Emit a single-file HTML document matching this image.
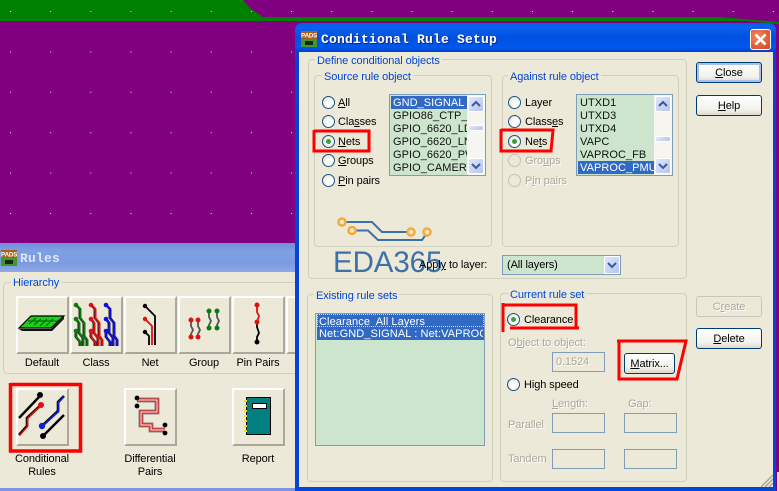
<!DOCTYPE html>
<html><head><meta charset="utf-8">
<style>
html,body{margin:0;padding:0}
body{width:779px;height:491px;overflow:hidden;position:relative;background:#800080;font-family:"Liberation Sans",sans-serif;font-size:11px;color:#000;letter-spacing:-.1px}
div,span.t{position:absolute;box-sizing:border-box}
.t{line-height:14px;white-space:nowrap;margin-top:1px}
.bl{color:#0046d5;background:#ece9d8;padding:0 2px}
.dis{color:#aca899;text-shadow:1px 1px 0 #fff}
.gb{border:1px solid #d0d0bf;border-radius:4px}
.r{width:13px;height:13px;border-radius:50%;border:1px solid #1c5180;background:radial-gradient(circle at 65% 65%,#fff 30%,#dcd8cc 100%)}
.r.on:after{content:"";position:absolute;left:3px;top:3px;width:5px;height:5px;border-radius:50%;background:#2fa82f}
.r.off{border-color:#c5c2b2;background:#ece9d8}
.btn{border:1px solid #003c74;border-radius:3px;background:linear-gradient(#fff,#f3f2ec 70%,#dcd8cc);text-align:center;line-height:21px}
.btn.def{box-shadow:inset 0 0 0 2px #a8c0e8}
.btn.d{border-color:#c9c7ba;color:#aca899;background:#ece9d8;text-shadow:1px 1px 0 #fff}
.list{background:#cce5cc;border:1px solid #7f9db9;overflow:hidden}
.row{left:1px;padding-left:2px;height:13px;line-height:14px;width:76px;overflow:hidden;white-space:nowrap;color:#111;letter-spacing:.05px;font-size:11px}
.sel{background:#316ac5;color:#fff}
.sb{left:77px;top:0;width:18px;height:80px;background:#f6f5f0}
.sbb{left:1px;width:16px;height:16px;background:linear-gradient(135deg,#dfe8fb,#b3c5ef);border:1px solid #fff;border-radius:2px}
.inp{border:1px solid #7f9db9;background:#ece9d8}
.tile{background:#ece9d8;border:2px solid;border-color:#fff #aca899 #aca899 #fff}
.lab{text-align:center;line-height:13px}
</style></head><body>

<svg style="position:absolute;left:0;top:0" width="779" height="491">
<defs><pattern id="p" x="10" y="11" width="40.15" height="40.4" patternUnits="userSpaceOnUse"><rect width="1" height="1" fill="#e8e0e8"/></pattern></defs>
<rect width="779" height="491" fill="#800080"/>
<path d="M0 0H243L250 8L263 17H720L779 22V24L745 21H0Z" fill="#008000"/>
<rect width="779" height="243" fill="url(#p)"/>
<rect x="777" y="472" width="2" height="19" fill="#dcdcdc"/>
</svg>

<!-- Rules window -->
<div style="left:0;top:243px;width:295px;height:29px;background:linear-gradient(#7090dc,#7f9fe4 30%,#7c9be0 70%,#90a8e8)"></div>
<span class="t" style="left:20px;top:251px;font:bold 13px/14px 'Liberation Mono',monospace;color:#dfe7f8;letter-spacing:.2px">Rules</span>
<div style="left:0;top:272px;width:295px;height:216px;background:#ece9d8"></div>
<div style="left:0;top:488px;width:295px;height:3px;background:#7b95e0"></div>
<svg style="position:absolute;left:1px;top:250px" width="16" height="16"><rect width="16" height="8" fill="#a8601c"/><rect y="8" width="16" height="8" fill="#3f9a2a"/><rect x="4" y="10" width="8" height="4" fill="#222"/><text x="0" y="6.5" font-family="Liberation Sans" font-weight="bold" font-size="6.2" fill="#fff">PADS</text></svg>

<div class="gb" style="left:3px;top:282px;width:310px;height:92px"></div>
<span class="t bl" style="left:11px;top:275px">Hierarchy</span>

<div class="tile" style="left:16px;top:296px;width:53px;height:58px"></div>
<div class="tile" style="left:70px;top:296px;width:53px;height:58px"></div>
<div class="tile" style="left:124px;top:296px;width:53px;height:58px"></div>
<div class="tile" style="left:178px;top:296px;width:53px;height:58px"></div>
<div class="tile" style="left:232px;top:296px;width:53px;height:58px"></div>
<div class="tile" style="left:286px;top:296px;width:20px;height:58px"></div>
<div class="tile" style="left:16px;top:388px;width:53px;height:58px"></div>
<div class="tile" style="left:124px;top:388px;width:53px;height:58px"></div>
<div class="tile" style="left:232px;top:388px;width:53px;height:58px"></div>

<svg style="position:absolute;left:0;top:0" width="295" height="491" fill="none" stroke-linejoin="miter">
<!-- default -->
<path d="M19 328L31 316H64L51 328Z" fill="#18d018" stroke="#000" stroke-width="1.2"/>
<path d="M19 329H51L64 317V319L52 331H22Z" fill="#111"/>
<path d="M29 324L36 318M34 325L41 319M40 326L47 319M46 326L53 319M28 321H58" stroke="#0a5a0a"/>
<!-- class -->
<defs><g id="tr"><path d="M76 305L80 309V318L84 323V336L87 340V346M76 319L79 323V333L83 338V346M76 331V337L80 342V346"/></g></defs>
<g stroke-width="2">
<g transform="translate(-1 0)" stroke="#222" stroke-width="1"><use href="#tr"/></g><g stroke="#107810" transform="translate(.5 0)"><use href="#tr"/></g>
<g transform="translate(14 0)" stroke="#222" stroke-width="1"><use href="#tr"/></g><g stroke="#e01010" transform="translate(15.5 0)"><use href="#tr"/></g>
<g transform="translate(29 0)" stroke="#222" stroke-width="1"><use href="#tr"/></g><g stroke="#1010e0" transform="translate(30.5 0)"><use href="#tr"/></g>
</g>
<g fill="#107810"><circle cx="76" cy="305" r="2.3"/><circle cx="76" cy="319" r="2.3"/><circle cx="76" cy="331" r="2.3"/></g>
<g fill="#e01010"><circle cx="91" cy="305" r="2.3"/><circle cx="91" cy="319" r="2.3"/><circle cx="91" cy="331" r="2.3"/></g>
<g fill="#1010e0"><circle cx="106" cy="305" r="2.3"/><circle cx="106" cy="319" r="2.3"/><circle cx="106" cy="331" r="2.3"/></g>
<!-- net -->
<path d="M145 306L155 316V345" stroke="#000" stroke-width="1.8"/><path d="M145 319L152 326V345" stroke="#e01010" stroke-width="1.8"/><path d="M145 332L149 336V345" stroke="#000" stroke-width="1.8"/>
<circle cx="145" cy="306" r="2.2" fill="#000"/><circle cx="145" cy="319" r="2.2" fill="#e01010"/><circle cx="145" cy="332" r="2.2" fill="#000"/>
<!-- group -->
<path d="M191 320V326L193 330L191 334V337M198 320V326L200 330L198 334V337" stroke="#555" stroke-width="1.8"/>
<path d="M209 311V317L211 321L209 325V328M217 311V317L219 321L217 325V328" stroke="#555" stroke-width="1.8"/>
<g fill="#e01010"><circle cx="191" cy="320" r="2.5"/><circle cx="198" cy="320" r="2.5"/><circle cx="191" cy="337" r="2.5"/><circle cx="198" cy="337" r="2.5"/></g>
<g fill="#107810"><circle cx="209" cy="311" r="2.5"/><circle cx="217" cy="311" r="2.5"/><circle cx="209" cy="328" r="2.5"/><circle cx="217" cy="328" r="2.5"/></g>
<!-- pin pairs -->
<path d="M257 305V312L259 316L257 322" stroke="#e01010" stroke-width="1.8"/><path d="M257 322V327L259 333L257 337V342" stroke="#000" stroke-width="1.8"/>
<circle cx="257" cy="305" r="2.5" fill="#e01010"/><circle cx="257" cy="322" r="2.5" fill="#e01010"/><circle cx="257" cy="342" r="2.5" fill="#000"/>
<!-- conditional -->
<path d="M19 418L40 396" stroke="#000" stroke-width="2.400"/>
<path d="M19 435L27 426V418L41 405" stroke="#000" stroke-width="2.600"/><path d="M19.500 435.500L27.500 426.500V418.500L41 405.500" stroke="#e01010" stroke-width="1.600"/>
<path d="M64 396L58 402V411L42 426" stroke="#000" stroke-width="2.600"/><path d="M64 396.500L58.500 402.500V411.500L42 426.500" stroke="#1020d0" stroke-width="1.800"/>
<path d="M64 415L43 436" stroke="#000" stroke-width="2.400"/>
<circle cx="40" cy="395" r="3" fill="#000"/><circle cx="41" cy="405" r="3" fill="#e01010"/><circle cx="42" cy="426" r="3.200" fill="#1020d0"/><circle cx="43" cy="436" r="3" fill="#000"/>
<!-- differential -->
<path d="M137 400H157V412H141V425H151V430H165" stroke="#888" stroke-width="5"/>
<path d="M137 400H157V412H141V425H151V430H165" stroke="#e01010" stroke-width="3"/>
<path d="M137 400H157V412H141V425H151V430H165" stroke="#fff" stroke-width="1"/>
<g fill="#000"><circle cx="137" cy="398" r="2.4"/><circle cx="137" cy="406" r="2.4"/><circle cx="165" cy="425" r="2.4"/><circle cx="165" cy="433" r="2.4"/></g>
<!-- report -->
<rect x="246.500" y="397.500" width="24" height="37" fill="#008080" stroke="#000"/>
<rect x="252.500" y="403.500" width="14" height="5" fill="#fff" stroke="#000"/>
<g fill="#f0e030"><rect x="244" y="400" width="3" height="2"/><rect x="244" y="405" width="3" height="2"/><rect x="244" y="410" width="3" height="2"/><rect x="244" y="415" width="3" height="2"/><rect x="244" y="420" width="3" height="2"/><rect x="244" y="425" width="3" height="2"/><rect x="244" y="430" width="3" height="2"/></g>
</svg>

<div class="lab" style="left:12px;top:357px;width:60px">Default</div>
<div class="lab" style="left:66px;top:357px;width:60px">Class</div>
<div class="lab" style="left:120px;top:357px;width:60px">Net</div>
<div class="lab" style="left:174px;top:357px;width:60px">Group</div>
<div class="lab" style="left:228px;top:357px;width:60px">Pin Pairs</div>
<div class="lab" style="left:2px;top:453px;width:80px">Conditional<br>Rules</div>
<div class="lab" style="left:110px;top:453px;width:80px">Differential<br>Pairs</div>
<div class="lab" style="left:218px;top:453px;width:80px">Report</div>

<!-- Dialog -->
<div style="left:295px;top:23px;width:481px;height:468px;background:linear-gradient(#0a3fd6,#0a3fd6 20px,#0046d8);border-radius:7px 7px 0 0"></div>
<div style="left:295px;top:23px;width:481px;height:29px;background:linear-gradient(#0a5ae0,#0a62f0 15%,#0050e0 50%,#0058ec 85%,#0040c8);border-radius:7px 7px 0 0"></div>
<div style="left:299px;top:52px;width:474px;height:435px;background:#ece9d8"></div>
<svg style="position:absolute;left:301px;top:31px" width="16" height="16"><rect width="16" height="8" fill="#a8601c"/><rect y="8" width="16" height="8" fill="#3f9a2a"/><rect x="4" y="10" width="8" height="4" fill="#222"/><text x="0" y="6.5" font-family="Liberation Sans" font-weight="bold" font-size="6.2" fill="#fff">PADS</text></svg>
<span class="t" style="left:321px;top:32px;font:bold 13px/14px 'Liberation Mono',monospace;color:#fff;letter-spacing:.2px;text-shadow:1px 1px 0 #0a2a90">Conditional Rule Setup</span>
<div style="left:750px;top:29px;width:21px;height:21px;border:1px solid #fff;border-radius:3px;background:radial-gradient(circle at 35% 35%,#ef8a60,#d8421c)"></div>
<svg style="position:absolute;left:750px;top:29px" width="21" height="21"><path d="M5.500 5.500L15.500 15.500M15.500 5.500L5.500 15.500" stroke="#fff" stroke-width="2.600"/></svg>

<!-- Groups -->
<div class="gb" style="left:308px;top:59px;width:379px;height:220px"></div>
<span class="t bl" style="left:315px;top:53px">Define conditional objects</span>
<div class="gb" style="left:314px;top:75px;width:178px;height:172px"></div>
<span class="t bl" style="left:322px;top:69px">Source rule object</span>
<div class="gb" style="left:502px;top:75px;width:177px;height:172px"></div>
<span class="t bl" style="left:508px;top:69px">Against rule object</span>
<div class="gb" style="left:307px;top:294px;width:186px;height:188px"></div>
<span class="t bl" style="left:314px;top:288px">Existing rule sets</span>
<div class="gb" style="left:500px;top:293px;width:187px;height:189px"></div>
<span class="t bl" style="left:508px;top:287px">Current rule set</span>

<!-- Source radios -->
<div class="r" style="left:322px;top:96px"></div><span class="t" style="left:338px;top:95px"><u>A</u>ll</span>
<div class="r" style="left:322px;top:115px"></div><span class="t" style="left:338px;top:114px">Cla<u>s</u>ses</span>
<div class="r on" style="left:322px;top:135px"></div><span class="t" style="left:338px;top:134px"><u>N</u>ets</span>
<div class="r" style="left:322px;top:154px"></div><span class="t" style="left:338px;top:153px"><u>G</u>roups</span>
<div class="r" style="left:322px;top:174px"></div><span class="t" style="left:338px;top:173px"><u>P</u>in pairs</span>

<!-- Source list -->
<div class="list" style="left:389px;top:94px;width:97px;height:82px">
<div class="row sel" style="top:1px">GND_SIGNAL</div>
<div class="row" style="top:14px">GPIO86_CTP_R</div>
<div class="row" style="top:27px">GPIO_6620_LDO</div>
<div class="row" style="top:40px">GPIO_6620_LNA</div>
<div class="row" style="top:53px">GPIO_6620_PWR</div>
<div class="row" style="top:66px">GPIO_CAMERA</div>
<div class="sb"><div class="sbb" style="top:1px"></div><div class="sbb" style="top:30px;height:6px"></div><div class="sbb" style="top:63px"></div>
<svg style="position:absolute;left:0;top:0" width="18" height="80" fill="none" stroke="#3a5a98" stroke-width="2"><path d="M5 11L9 7L13 11M5 69L9 73L13 69"/></svg></div>
</div>

<!-- Against radios -->
<div class="r" style="left:508px;top:96px"></div><span class="t" style="left:525px;top:95px">Layer</span>
<div class="r" style="left:508px;top:115px"></div><span class="t" style="left:525px;top:114px">Class<u>e</u>s</span>
<div class="r on" style="left:508px;top:135px"></div><span class="t" style="left:525px;top:134px">Ne<u>t</u>s</span>
<div class="r off" style="left:508px;top:154px"></div><span class="t dis" style="left:525px;top:153px">Gro<u>u</u>ps</span>
<div class="r off" style="left:508px;top:174px"></div><span class="t dis" style="left:525px;top:173px">P<u>i</u>n pairs</span>

<div class="list" style="left:576px;top:94px;width:97px;height:82px">
<div class="row" style="top:1px">UTXD1</div>
<div class="row" style="top:14px">UTXD3</div>
<div class="row" style="top:27px">UTXD4</div>
<div class="row" style="top:40px">VAPC</div>
<div class="row" style="top:53px">VAPROC_FB</div>
<div class="row sel" style="top:66px">VAPROC_PMU</div>
<div class="sb"><div class="sbb" style="top:1px"></div><div class="sbb" style="top:41px;height:6px"></div><div class="sbb" style="top:63px"></div>
<svg style="position:absolute;left:0;top:0" width="18" height="80" fill="none" stroke="#3a5a98" stroke-width="2"><path d="M5 11L9 7L13 11M5 69L9 73L13 69"/></svg></div>
</div>

<!-- Logo -->
<svg style="position:absolute;left:330px;top:212px" width="120" height="66" fill="none">
<path d="M12 10H42L52 20H81M22 18.500H38L48 28H92L97 21" stroke="#3c70a8" stroke-width="2"/>
<g stroke="#f2a93f" stroke-width="2.500" fill="#fbe9c8"><circle cx="12" cy="10" r="3.500"/><circle cx="22" cy="18.500" r="3.500"/><circle cx="81" cy="20" r="3.500"/><circle cx="97" cy="20" r="3.500"/></g>
<text x="3" y="60" font-family="Liberation Sans" font-size="29.500" fill="#3c70a8">EDA365</text>
</svg>
<span class="t" style="left:419px;top:257px">Appl<u>y</u> to layer:</span>

<!-- Combo -->
<div style="left:502px;top:255px;width:119px;height:20px;background:#cce5cc;border:1px solid #7f9db9"></div>
<span class="t" style="left:507px;top:257px">(All layers)</span>
<div style="left:604px;top:256px;width:16px;height:18px;background:linear-gradient(135deg,#dfe8fb,#b3c5ef);border:1px solid #fff;border-radius:2px"></div>
<svg style="position:absolute;left:604px;top:256px" width="16" height="18" fill="none" stroke="#3a5a98" stroke-width="2"><path d="M4 7L8 11L12 7"/></svg>

<!-- Existing list -->
<div class="list" style="left:315px;top:313px;width:170px;height:133px">
<div style="left:1px;top:0;width:167px;height:26px;background:#316ac5"></div>
<div style="left:1px;top:0;width:167px;height:13px;border:1px dotted #f0d890"></div>
<span class="t" style="left:3px;top:0;color:#fff;line-height:14px;letter-spacing:.1px">Clearance&nbsp; All Layers</span>
<div style="left:3px;top:13px;width:164px;height:14px;overflow:hidden;color:#fff;line-height:14px;white-space:nowrap;letter-spacing:.1px">Net:GND_SIGNAL : Net:VAPROC_PMU</div>
</div>

<!-- Current rule set -->
<div class="r on" style="left:507px;top:313px"></div><span class="t" style="left:524px;top:312px">Clearance</span>
<span class="t dis" style="left:508px;top:335px">O<u>b</u>ject to object:</span>
<div class="inp" style="left:552px;top:352px;width:53px;height:20px"></div>
<span class="t dis" style="left:556px;top:354px">0.1524</span>
<div class="btn" style="left:624px;top:353px;width:51px;height:21px"><u>M</u>atrix...</div>
<div class="r" style="left:507px;top:378px"></div><span class="t" style="left:524px;top:377px">High speed</span>
<span class="t dis" style="left:552px;top:396px"><u>L</u>ength:</span>
<span class="t dis" style="left:628px;top:396px">Gap:</span>
<span class="t dis" style="left:508px;top:417px">Parallel</span>
<div class="inp" style="left:552px;top:413px;width:53px;height:20px"></div>
<div class="inp" style="left:624px;top:413px;width:53px;height:20px"></div>
<span class="t dis" style="left:508px;top:451px;width:38px;overflow:hidden">Tandem</span>
<div class="inp" style="left:552px;top:449px;width:53px;height:20px"></div>
<div class="inp" style="left:624px;top:449px;width:53px;height:20px"></div>

<!-- Buttons -->
<div class="btn def" style="left:696px;top:62px;width:66px;height:21px"><u>C</u>lose</div>
<div class="btn" style="left:696px;top:95px;width:66px;height:21px"><u>H</u>elp</div>
<div class="btn d" style="left:696px;top:296px;width:66px;height:21px">C<u>r</u>eate</div>
<div class="btn" style="left:696px;top:328px;width:66px;height:21px"><u>D</u>elete</div>

<!-- Resize grip -->
<svg style="position:absolute;left:761px;top:475px" width="12" height="12" stroke="#aca899" stroke-width="1.500"><path d="M0 12L12 0M4 12L12 4M8 12L12 8"/></svg>

<!-- Red annotations -->
<svg style="position:absolute;left:0;top:0" width="779" height="491" fill="none" stroke="#f00" stroke-width="3">
<path d="M11 384.500H80.500V451H10.500V383" stroke-width="3.500"/>
<path d="M314 131H369V151H314V130"/>
<path d="M501 130H553L551 151H501V129"/>
<path d="M503 303V332M503 305H576V328M510 328H579"/>
<path d="M617 341H686L677 379H619V341"/>
</svg>
</body></html>
